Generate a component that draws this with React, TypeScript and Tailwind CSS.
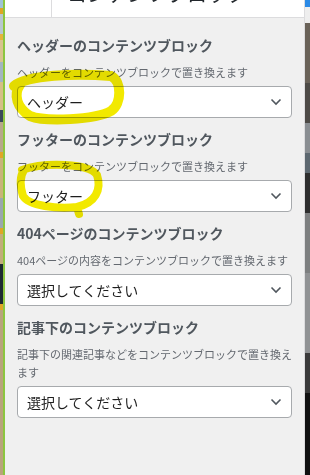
import type { ReactNode } from 'react'

const FONT = "font-['Meiryo','Noto_Sans_CJK_JP',sans-serif]"

type Block = {
  title: string
  desc: ReactNode
  value: string
}

const BLOCKS: Block[] = [
  { title: 'ヘッダーのコンテンツブロック', desc: 'ヘッダーをコンテンツブロックで置き換えます', value: 'ヘッダー' },
  { title: 'フッターのコンテンツブロック', desc: 'フッターをコンテンツブロックで置き換えます', value: 'フッター' },
  { title: '404ページのコンテンツブロック', desc: '404ページの内容をコンテンツブロックで置き換えます', value: '選択してください' },
  {
    title: '記事下のコンテンツブロック',
    desc: <>記事下の関連記事などをコンテンツブロックで置き換え<br />ます</>,
    value: '選択してください',
  },
]

function Chevron() {
  return (
    <svg width="12" height="8" viewBox="0 0 12 8" className="shrink-0">
      <polyline points="1.5,1.5 6,6 10.5,1.5" fill="none" stroke="#50575e" strokeWidth="1.6" />
    </svg>
  )
}

function SelectBox({ value }: { value: string }) {
  return (
    <div className="flex items-center justify-between h-[32px] pl-[9px] pr-[9px] bg-white border border-[#a7aaad] rounded-[4px]">
      <span className="text-[14px] leading-none text-[#1e1e1e]">{value}</span>
      <Chevron />
    </div>
  )
}

function Section({ block }: { block: Block }) {
  return (
    <div className="flex flex-col mb-[11px]">
      <h3 className="text-[14px] leading-[20px] font-semibold text-[#50575e] mb-[8px] whitespace-nowrap">{block.title}</h3>
      <p className="text-[11px] leading-[18px] text-[#646970] mb-[5px] whitespace-nowrap">{block.desc}</p>
      <SelectBox value={block.value} />
    </div>
  )
}

export default function App() {
  return (
    <div className={`relative flex w-[310px] h-[475px] overflow-hidden bg-[#f0f0f0] ${FONT}`}>
      {/* page behind, left */}
      <div className="flex flex-col w-[3px] shrink-0">
        <div className="h-[8px] bg-[#9fc2d6]" />
        <div className="h-[6px] bg-[#e0a526]" />
        <div className="h-[20px] bg-[#b9c7cf]" />
        <div className="h-[6px] bg-[#e6b43a]" />
        <div className="h-[22px] bg-[#d8c38f]" />
        <div className="h-[20px] bg-[#a3b5bf]" />
        <div className="h-[28px] bg-[#d5bf87]" />
        <div className="h-[12px] bg-[#3b4a58]" />
        <div className="h-[30px] bg-[#b8a88a]" />
        <div className="h-[6px] bg-[#e0a526]" />
        <div className="h-[40px] bg-[#c9b37a]" />
        <div className="h-[30px] bg-[#9aa7ad]" />
        <div className="h-[6px] bg-[#e0a526]" />
        <div className="h-[30px] bg-[#c2ad7a]" />
        <div className="h-[40px] bg-[#1e2a30]" />
        <div className="h-[6px] bg-[#e0a526]" />
        <div className="flex-1 bg-[#b9a47c]" />
      </div>
      <div className="w-[2px] shrink-0 bg-[#8cc63f]" />

      {/* panel */}
      <div className="relative flex flex-col w-[299px] shrink-0">
        <div className="flex h-[18px] bg-white border-b border-[#dcdcde] shrink-0">
          <div className="w-[47px] border-r border-[#dcdcde]" />
          <div className="flex-1 overflow-hidden pl-[15px]">
            <div className="mt-[-16px] text-[20px] leading-[20px] text-[#23282d] whitespace-nowrap">コンテンツブロック</div>
          </div>
        </div>
        <div className="flex flex-col px-[12px] pt-[17px]">
          {BLOCKS.map(b => (
            <Section key={b.title} block={b} />
          ))}
        </div>

        {/* marker scribbles */}
        <svg className="absolute left-0 top-0 pointer-events-none mix-blend-multiply" width="299" height="475">
          <path
            d="M9 86 C 22 75, 70 73, 106 76 C 117 81, 117 104, 106 111 C 90 120, 40 122, 25 116 C 12 108, 8 95, 15 85"
            fill="none" stroke="#f2e900" strokeWidth="10" strokeLinecap="round"
          />
          <path
            d="M17 170 C 40 162, 84 163, 92 175 C 97 190, 90 203, 72 207 L 74 214 M 72 207 C 52 209, 24 206, 18 196 C 15 186, 15 176, 19 170"
            fill="none" stroke="#f2e900" strokeWidth="8" strokeLinecap="round"
          />
        </svg>
      </div>

      {/* page behind, right */}
      <div className="flex flex-col w-[6px] shrink-0 border-l border-[#dcdcde]">
        <div className="h-[7px] bg-[#2b8ae6]" />
        <div className="h-[16px] bg-[#eeeeee]" />
        <div className="h-[60px] bg-[#6a6258]" />
        <div className="h-[40px] bg-[#4d4a46]" />
        <div className="h-[30px] bg-[#8a8e92]" />
        <div className="h-[20px] bg-[#5d6870]" />
        <div className="h-[40px] bg-[#2e2e2e]" />
        <div className="h-[60px] bg-[#7d7f80]" />
        <div className="h-[80px] bg-[#909294]" />
        <div className="h-[40px] bg-[#3a3a3a]" />
        <div className="flex-1 bg-[#111111]" />
      </div>
    </div>
  )
}
